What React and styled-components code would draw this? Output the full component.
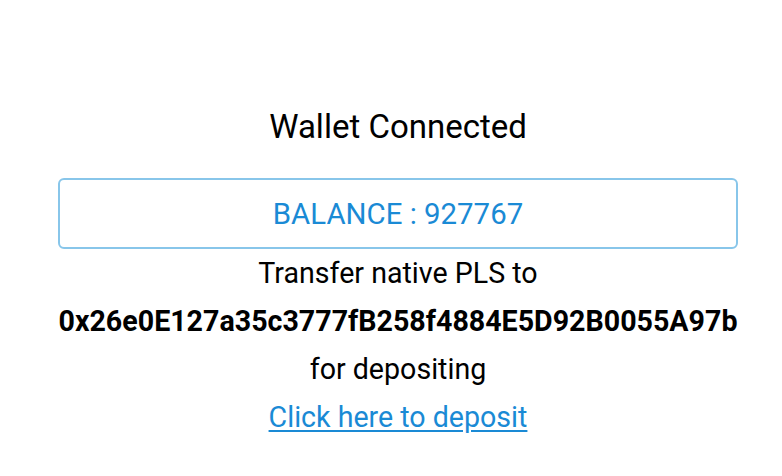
import React from "react";
import styled, { createGlobalStyle } from "styled-components";

const Global = createGlobalStyle`
  html, body { margin: 0; padding: 0; background: #ffffff; }
  body { font-family: Roboto, "Liberation Sans", sans-serif; color: #000; }
`;

const Page = styled.main`
  width: 782px;
  min-height: 476px;
  box-sizing: border-box;
  padding: 104px 44px 0 58px;
  display: flex;
  flex-direction: column;
  align-items: center;
`;

const Title = styled.h2`
  margin: 0 0 28px;
  font-size: 33px;
  font-weight: 400;
  line-height: 46px;
`;

const BalanceBox = styled.div`
  align-self: stretch;
  height: 71px;
  box-sizing: border-box;
  border: 2px solid #88c6ea;
  border-radius: 6px;
  display: flex;
  align-items: center;
  justify-content: center;
  color: #1a8ad5;
  font-size: 29.4px;
`;

const Line = styled.p`
  margin: 0;
  font-size: 28.6px;
  line-height: 48px;
  font-weight: ${(p) => (p.$bold ? 700 : 400)};
  text-align: center;
  white-space: nowrap;
`;

const DepositLink = styled.a`
  font-size: 28.6px;
  line-height: 48px;
  color: #1a8ad5;
  text-decoration: underline;
  text-underline-offset: 3px;
`;

export default function App() {
  return (
    <>
      <Global />
      <Page>
        <Title>Wallet Connected</Title>
        <BalanceBox>BALANCE : 927767</BalanceBox>
        <Line>Transfer native PLS to</Line>
        <Line $bold>0x26e0E127a35c3777fB258f4884E5D92B0055A97b</Line>
        <Line>for depositing</Line>
        <DepositLink href="#">Click here to deposit</DepositLink>
      </Page>
    </>
  );
}
